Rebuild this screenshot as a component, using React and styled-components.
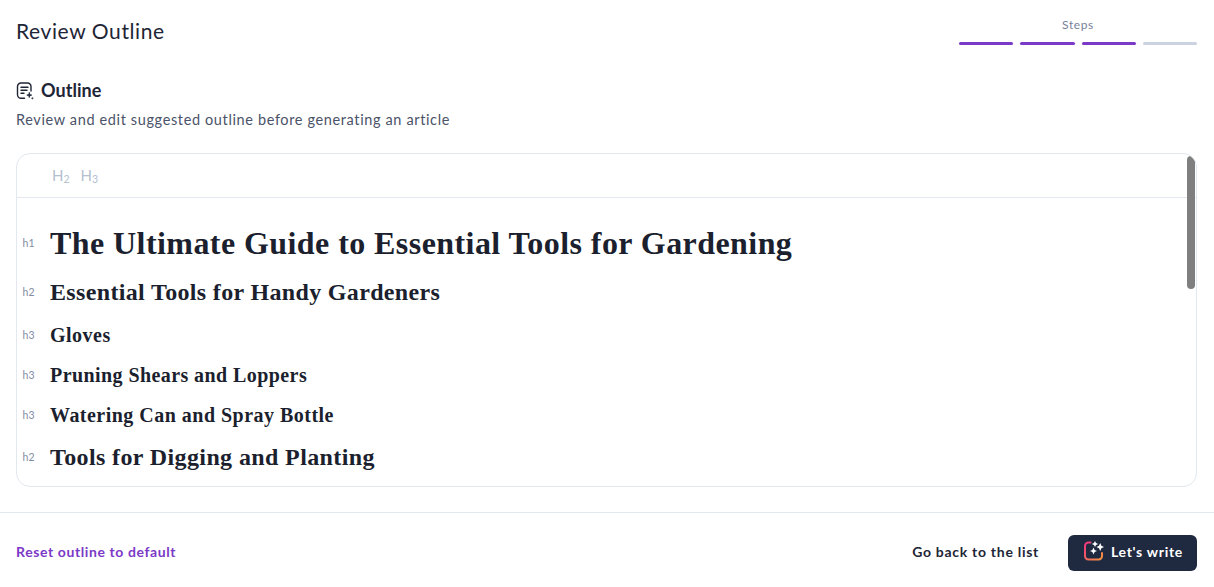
import React from "react"
import styled, { createGlobalStyle } from "styled-components"

const GlobalStyle = createGlobalStyle`
    html, body {
        margin: 0;
        padding: 0;
        background: #FFFFFF;
    }
    body {
        font-family: "Lato", "Open Sans", sans-serif;
        color: #1E2536;
    }
`
const Page = styled.div`
    width: 1214px;
    height: 587px;
    display: flex;
    flex-direction: column;
    overflow: hidden;
`
const Main = styled.main`
    display: flex;
    flex-direction: column;
    padding: 0 17px 0 16px;
`
const TopBar = styled.header`
    display: flex;
    justify-content: space-between;
    align-items: flex-start;
    height: 81px;
`
const PageTitle = styled.h1`
    margin: 17px 0 0;
    font-size: 21px;
    line-height: 28px;
    font-weight: 400;
    letter-spacing: 0.6px;
    color: #1E2536;
`
const Steps = styled.div`
    display: flex;
    flex-direction: column;
    align-items: center;
    width: 238px;
    padding-top: 17px;
`
const StepsLabel = styled.span`
    font-size: 12px;
    line-height: 16px;
    letter-spacing: 0.6px;
    color: #76819A;
`
const StepBars = styled.div`
    display: flex;
    gap: 7px;
    width: 100%;
    margin-top: 9px;
`
const StepBar = styled.span`
    flex: 1;
    height: 3px;
    border-radius: 2px;
    background: ${(p) => (p.$done ? "#7B39C7" : "#CBD3E1")};
`
const SectionHead = styled.div`
    display: flex;
    align-items: center;
    gap: 7px;
    height: 20px;
`
const SectionTitle = styled.h2`
    margin: 0 0 2px;
    font-size: 18px;
    line-height: 20px;
    font-weight: 700;
    letter-spacing: 0.05px;
    color: #1E2536;
`
const SectionHint = styled.p`
    margin: 9px 0 0;
    font-size: 14.5px;
    line-height: 20px;
    letter-spacing: 0.63px;
    color: #4A5368;
`
const Editor = styled.section`
    position: relative;
    margin-top: 23px;
    height: 334px;
    border: 1px solid #E2E7F0;
    border-radius: 14px;
    overflow: hidden;
    box-sizing: border-box;
`
const Toolbar = styled.div`
    display: flex;
    gap: 11px;
    align-items: center;
    height: 41px;
    padding: 0 0 2px 35px;
    border-bottom: 1px solid #E2E7F0;
`
const ToolLabel = styled.span`
    font-size: 15px;
    color: #B4BFD0;

    sub {
        font-size: 10.5px;
        line-height: 0;
        vertical-align: -2px;
    }
`
const Rows = styled.div`
    display: flex;
    flex-direction: column;
    padding-top: 19px;
`
const Row = styled.div`
    display: flex;
    align-items: center;
    height: ${(p) => p.$height}px;
`
const Tag = styled.span`
    width: 33px;
    flex: none;
    padding-right: 15px;
    box-sizing: border-box;
    text-align: right;
    font-size: 10.5px;
    letter-spacing: 0.3px;
    color: #838DA3;
`
const Heading = styled.span`
    font-family: "Liberation Serif", "Times New Roman", serif;
    font-weight: 700;
    white-space: nowrap;
    color: #1B1F2E;
    font-size: ${(p) => p.$size}px;
    letter-spacing: ${(p) => p.$spacing}px;
`
const Scrollbar = styled.div`
    position: absolute;
    top: 2px;
    right: 1px;
    width: 8px;
    height: 133px;
    border-radius: 4px;
    background: #7F7F7F;
`
const Footer = styled.footer`
    display: flex;
    align-items: center;
    justify-content: space-between;
    flex: none;
    margin-top: 25px;
    height: 81px;
    padding: 0 17px 0 16px;
    border-top: 1px solid #E2E7F0;
    box-sizing: border-box;
`
const ResetLink = styled.a`
    padding-bottom: 4px;
    font-size: 14px;
    font-weight: 700;
    letter-spacing: 0.6px;
    color: #7B39C7;
`
const Actions = styled.div`
    display: flex;
    align-items: center;
    gap: 29px;
`
const BackButton = styled.button`
    padding: 0 0 4px;
    border: none;
    background: none;
    font-family: inherit;
    font-size: 14px;
    font-weight: 700;
    letter-spacing: 0.72px;
    color: #1E2536;
`
const WriteButton = styled.button`
    display: flex;
    align-items: center;
    gap: 7px;
    width: 129px;
    height: 36px;
    padding: 0 0 4px 16px;
    border: none;
    border-radius: 6px;
    background: #1F2940;
    font-family: inherit;
    font-size: 14px;
    font-weight: 700;
    letter-spacing: 0.7px;
    color: #FFFFFF;
`

const OutlineIcon = () => (
    <svg width="18" height="18" viewBox="0 0 18 18" fill="none" stroke="#1E2536" strokeWidth="1.4" strokeLinecap="round" strokeLinejoin="round">
        <path d="M8.5 16.3H5a3.5 3.5 0 0 1-3.5-3.5V4.5A3.5 3.5 0 0 1 5 1h6.5A3.5 3.5 0 0 1 15 4.5V9" />
        <path d="M5 5.3h7M5 8.3h6M5 11.3h3" />
        <path d="M13.3 10.6l.6 1.9 1.9.6-1.9.6-.6 1.9-.6-1.9-1.9-.6 1.9-.6zM16.4 15.6v1.4M15.7 16.3h1.4" fill="#1E2536" strokeWidth="0.7" />
    </svg>
)

const SparkIcon = () => (
    <svg width="20" height="20" viewBox="0 0 20 20" fill="none">
        <defs>
            <linearGradient id="spark" x1="1" y1="2" x2="19" y2="19" gradientUnits="userSpaceOnUse">
                <stop offset="0" stopColor="#F0357F" />
                <stop offset="1" stopColor="#F59A3C" />
            </linearGradient>
        </defs>
        <path d="M6.5 1.5H4.5a3.5 3.5 0 0 0-3.5 3.5v10a3.5 3.5 0 0 0 3.5 3.5h10a3.5 3.5 0 0 0 3.5-3.5v-3" stroke="url(#spark)" strokeWidth="2" strokeLinecap="round" />
        <path d="M11 0l1 2 2.2 1-2.2 1-1 2-1-2-2.2-1 2.2-1z" fill="#FFFFFF" />
        <path d="M16.2 2l1.2 2.8 2.6 1.2-2.6 1.2-1.2 2.8-1.2-2.8-2.6-1.2 2.6-1.2z" fill="#FFFFFF" />
        <path d="M9.5 6.5l1.1 2.4 2.4 1.1-2.4 1.1-1.1 2.4-1.1-2.4L6 10l2.4-1.1z" fill="#FFFFFF" />
    </svg>
)

const outline = [
    { tag: "h1", text: "The Ultimate Guide to Essential Tools for Gardening", size: 32, spacing: 0.43, height: 52 },
    { tag: "h2", text: "Essential Tools for Handy Gardeners", size: 24, spacing: 0.34, height: 46 },
    { tag: "h3", text: "Gloves", size: 20, spacing: 0.5, height: 40 },
    { tag: "h3", text: "Pruning Shears and Loppers", size: 20, spacing: 0.42, height: 40 },
    { tag: "h3", text: "Watering Can and Spray Bottle", size: 20, spacing: 0.48, height: 40 },
    { tag: "h2", text: "Tools for Digging and Planting", size: 24, spacing: 0.38, height: 44 },
]

export default function App() {
    return (
        <Page>
            <GlobalStyle />
            <Main>
                <TopBar>
                    <PageTitle>Review Outline</PageTitle>
                    <Steps>
                        <StepsLabel>Steps</StepsLabel>
                        <StepBars>
                            <StepBar $done />
                            <StepBar $done />
                            <StepBar $done />
                            <StepBar />
                        </StepBars>
                    </Steps>
                </TopBar>
                <SectionHead>
                    <OutlineIcon />
                    <SectionTitle>Outline</SectionTitle>
                </SectionHead>
                <SectionHint>Review and edit suggested outline before generating an article</SectionHint>
                <Editor>
                    <Toolbar>
                        <ToolLabel>H<sub>2</sub></ToolLabel>
                        <ToolLabel>H<sub>3</sub></ToolLabel>
                    </Toolbar>
                    <Rows>
                        {outline.map((row, key) => (
                            <Row key={key} $height={row.height}>
                                <Tag>{row.tag}</Tag>
                                <Heading $size={row.size} $spacing={row.spacing}>{row.text}</Heading>
                            </Row>
                        ))}
                    </Rows>
                    <Scrollbar />
                </Editor>
            </Main>
            <Footer>
                <ResetLink>Reset outline to default</ResetLink>
                <Actions>
                    <BackButton>Go back to the list</BackButton>
                    <WriteButton>
                        <SparkIcon />
                        Let's write
                    </WriteButton>
                </Actions>
            </Footer>
        </Page>
    )
}
